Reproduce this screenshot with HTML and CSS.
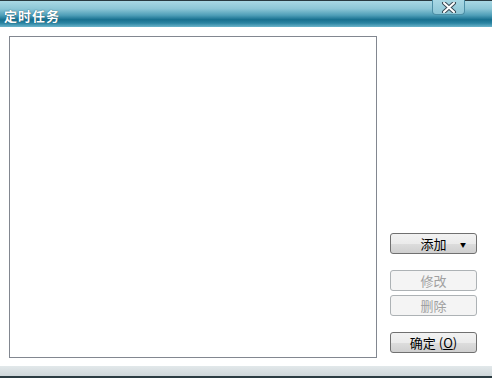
FILE: index.html
```html
<!DOCTYPE html>
<html lang="zh">
<head>
  <meta charset="UTF-8">
  <title>定时任务</title>
  <link rel="stylesheet" href="styles.css">
</head>
<body>
  <div class="window">
    <header class="titlebar">
      <span class="title">定时任务</span>
      <button class="close" title="关闭">
        <svg width="16" height="11" viewBox="0 0 16 11">
          <path d="M3 1 L13 10 M13 1 L3 10" stroke="#3a4a55" stroke-width="4" stroke-linecap="round"/>
          <path d="M3 1 L13 10 M13 1 L3 10" stroke="#ffffff" stroke-width="2" stroke-linecap="round"/>
        </svg>
      </button>
    </header>

    <div class="content">
      <div class="tasklist"></div>
      <div class="side">
        <button class="btn btn-drop">添加 <span class="arrow">&#9660;</span></button>
        <div class="group">
          <button class="btn" disabled>修改</button>
          <button class="btn" disabled>删除</button>
        </div>
        <button class="btn">确定 (<u>O</u>)</button>
      </div>
    </div>

    <footer class="statusbar"></footer>
  </div>
</body>
</html>
```

FILE: styles.css
```css
* {
  box-sizing: border-box;
}
html, body {
  margin: 0;
  padding: 0;
  background: #fff;
}
body {
  font-family: "Noto Sans CJK SC", "DejaVu Sans", sans-serif;
  font-size: 12px;
  color: #000;
}
.window {
  width: 492px;
  height: 378px;
  display: flex;
  flex-direction: column;
  overflow: hidden;
}
.titlebar {
  height: 28px;
  display: flex;
  align-items: flex-start;
  justify-content: space-between;
  border-top: 1px solid #2a3a40;
  background: linear-gradient(to bottom, #a9d8e4 0%, #8cc6d6 30%, #4e9eb8 55%, #17708f 72%, #2a84a2 85%, #6cb4cb 100%);
}
.title {
  color: #fff;
  font-weight: bold;
  font-size: 13px;
  letter-spacing: 1px;
  padding: 5px 0 0 4px;
  text-shadow: 0 0 1px #0c3f52;
}
.close {
  width: 33px;
  height: 15px;
  margin: -1px 27px 0 0;
  padding: 0;
  border: 1px solid #4d8fa6;
  border-top: none;
  border-radius: 0 0 4px 4px;
  background: linear-gradient(to bottom, #a9d8e4, #8cc6d6);
  display: flex;
  align-items: center;
  justify-content: center;
}
.content {
  flex: 1;
  display: flex;
  padding: 9px 15px 8px 9px;
  gap: 13px;
}
.tasklist {
  width: 369px;
  height: 322px;
  border: 1px solid #828790;
  background: #fff;
}
.side {
  flex: 1;
  display: flex;
  flex-direction: column;
  justify-content: flex-end;
  padding-bottom: 5px;
}
.group {
  display: flex;
  flex-direction: column;
  gap: 4px;
  margin: 16px 0;
}
.btn {
  width: 87px;
  height: 21px;
  padding: 0;
  font-family: inherit;
  font-size: 13px;
  color: #000;
  border: 1px solid #707070;
  border-radius: 3px;
  background: linear-gradient(to bottom, #f2f2f2 0%, #ebebeb 50%, #dddddd 51%, #cfcfcf 100%);
}
.btn:disabled {
  color: #a0a0a0;
  border-color: #adb2b5;
  background: #f4f4f4;
}
.btn-drop {
  position: relative;
}
.arrow {
  position: absolute;
  right: 10px;
  top: 6px;
  font-size: 6px;
}
.statusbar {
  height: 12px;
  background: linear-gradient(to bottom, #e2e8ea, #d0d8db 80%, #2c3c42 80%);
}
```
